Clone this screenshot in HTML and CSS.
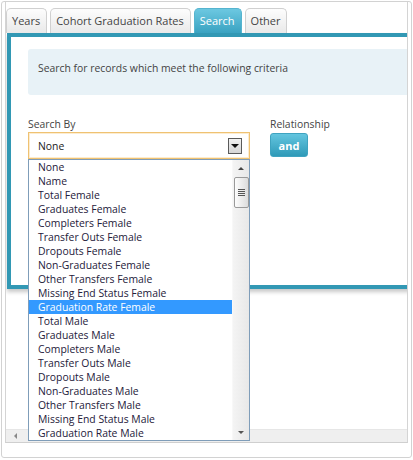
FILE: index.html
```html
<!DOCTYPE html>
<html>
<head>
<meta charset="utf-8">
<link rel="stylesheet" href="styles.css">
</head>
<body>
<div class="frame">
  <div class="viewport">
    <div class="canvas">
      <div class="tabs">
        <div class="tab">Years</div>
        <div class="tab">Cohort Graduation Rates</div>
        <div class="tab active">Search</div>
        <div class="tab">Other</div>
      </div>
      <div class="panel">
        <div class="info">Search for records which meet the following criteria</div>
        <div class="criteria">
          <div class="field search-by">
            <div class="label">Search By</div>
            <div class="select">
              <span class="value">None</span>
              <span class="arrow-btn"><span class="tri-down"></span></span>
              <div class="dropdown">
                <ul class="options">
                  <li>None</li>
                  <li>Name</li>
                  <li>Total Female</li>
                  <li>Graduates Female</li>
                  <li>Completers Female</li>
                  <li>Transfer Outs Female</li>
                  <li>Dropouts Female</li>
                  <li>Non-Graduates Female</li>
                  <li>Other Transfers Female</li>
                  <li>Missing End Status Female</li>
                  <li class="selected">Graduation Rate Female</li>
                  <li>Total Male</li>
                  <li>Graduates Male</li>
                  <li>Completers Male</li>
                  <li>Transfer Outs Male</li>
                  <li>Dropouts Male</li>
                  <li>Non-Graduates Male</li>
                  <li>Other Transfers Male</li>
                  <li>Missing End Status Male</li>
                  <li>Graduation Rate Male</li>
                </ul>
                <div class="vscroll">
                  <span class="sb-up"></span>
                  <span class="thumb"><span class="grip"></span></span>
                  <span class="sb-down"></span>
                </div>
              </div>
            </div>
          </div>
          <div class="field relationship">
            <div class="label">Relationship</div>
            <button class="and-btn">and</button>
          </div>
        </div>
      </div>
    </div>
    <div class="hscroll"><span class="sb-left"></span></div>
  </div>
</div>
</body>
</html>
```
FILE: styles.css
```css
* { box-sizing: border-box; }
html, body { margin: 0; padding: 0; background: #fff; }
body {
  font-family: "Open Sans", "Liberation Sans", sans-serif;
  font-size: 10.4px;
  color: #333;
}
.frame {
  margin: 1px 0 0 1px;
  width: 411px;
  height: 457px;
  border: 1px solid #d2d2d2;
  border-radius: 3px;
  padding: 0 3px 14px 3px;
}
.viewport {
  position: relative;
  height: 100%;
  border-left: 1px solid #d4d4d4;
  border-right: 1px solid #d4d4d4;
  border-bottom: 1px solid #cfcfcf;
  overflow: hidden;
  display: flex;
  flex-direction: column;
}
.canvas {
  flex: 1;
  padding-top: 6px;
  width: 440px;
}
.tabs {
  display: flex;
  gap: 3px;
  height: 25px;
  align-items: flex-end;
}
.tab {
  height: 25px;
  padding: 0 6px 0 5px;
  border: 1px solid #d0d0d0;
  border-bottom: none;
  border-radius: 5px 5px 0 0;
  background: linear-gradient(#fdfdfd, #e9e9e9);
  font-size: 11px;
  line-height: 24px;
  color: #444;
}
.tab.active {
  background: linear-gradient(#6cc8e1, #3aa2c1);
  border-color: #55b4cf;
  color: #fff;
}
.panel {
  margin-left: 1px;
  width: 430px;
  height: 256px;
  border: 4px solid #3298b4;
  box-shadow: 0 3px 4px rgba(0,0,0,0.22);
  padding: 12px 0 0 17px;
}
.info {
  height: 46px;
  background: #e8f2f7;
  border-radius: 3px 0 0 3px;
  padding: 12px 10px;
  line-height: 14px;
  color: #444;
}
.criteria {
  display: flex;
  gap: 20px;
  margin-top: 22px;
}
.label {
  line-height: 14px;
  height: 14px;
  margin-bottom: 1px;
  color: #444;
}
.select {
  position: relative;
  width: 222px;
  height: 27px;
  border: 1px solid #efc272;
  box-shadow: inset 0 0 0 1px #fcecd0;
  display: flex;
  align-items: center;
  justify-content: space-between;
  padding: 0 7px 0 9px;
  color: #222;
}
.arrow-btn {
  width: 14px;
  height: 16px;
  border: 1px solid #5a5a5a;
  background: linear-gradient(#f2f2f2, #d6d6d6);
  display: flex;
  align-items: center;
  justify-content: center;
}
.tri-down {
  width: 0; height: 0;
  border-left: 4px solid transparent;
  border-right: 4px solid transparent;
  border-top: 4px solid #111;
  margin-top: 1px;
}
.dropdown {
  position: absolute;
  top: 26px;
  left: -1px;
  width: 222px;
  height: 282px;
  border: 1px solid #7f9db9;
  background: #fff;
  display: flex;
  z-index: 5;
}
.options {
  list-style: none;
  margin: 0;
  padding: 0;
  flex: 1;
}
.options li {
  height: 14px;
  line-height: 14px;
  padding-left: 9px;
  color: #24203a;
  white-space: nowrap;
}
.options li.selected {
  background: #3399ff;
  color: #fff;
}
.vscroll {
  position: relative;
  width: 17px;
  background: linear-gradient(90deg, #f4f4f4, #e8e8e8);
  border-left: 1px solid #f8f8f8;
}
.sb-up, .sb-down {
  position: absolute;
  left: 5px;
  width: 0; height: 0;
  border-left: 3px solid transparent;
  border-right: 3px solid transparent;
}
.sb-up { top: 7px; border-bottom: 3px solid #444; }
.sb-down { bottom: 6px; border-top: 3px solid #555; }
.thumb {
  position: absolute;
  top: 17px;
  left: 1px;
  width: 15px;
  height: 31px;
  border: 1px solid #9a9a9a;
  border-radius: 2px;
  background: linear-gradient(90deg, #fdfdfd, #dcdcdc);
  display: flex;
  align-items: center;
  justify-content: center;
}
.grip {
  width: 7px;
  height: 7px;
  background: repeating-linear-gradient(#555 0 1px, transparent 1px 2px);
}
.and-btn {
  margin-top: 1px;
  width: 38px;
  height: 24px;
  border: 1px solid #3fa3c0;
  border-radius: 3px;
  background: linear-gradient(#63c5df, #2f9ab8);
  color: #fff;
  font-family: "Open Sans", "Liberation Sans", sans-serif;
  font-weight: bold;
  font-size: 11px;
  padding: 0;
}
.hscroll {
  height: 13px;
  background: #efefef;
  border-top: 1px solid #e6e6e6;
  position: relative;
}
.sb-left {
  position: absolute;
  left: 8px;
  top: 3px;
  width: 0; height: 0;
  border-top: 3px solid transparent;
  border-bottom: 3px solid transparent;
  border-right: 3px solid #888;
}
```
